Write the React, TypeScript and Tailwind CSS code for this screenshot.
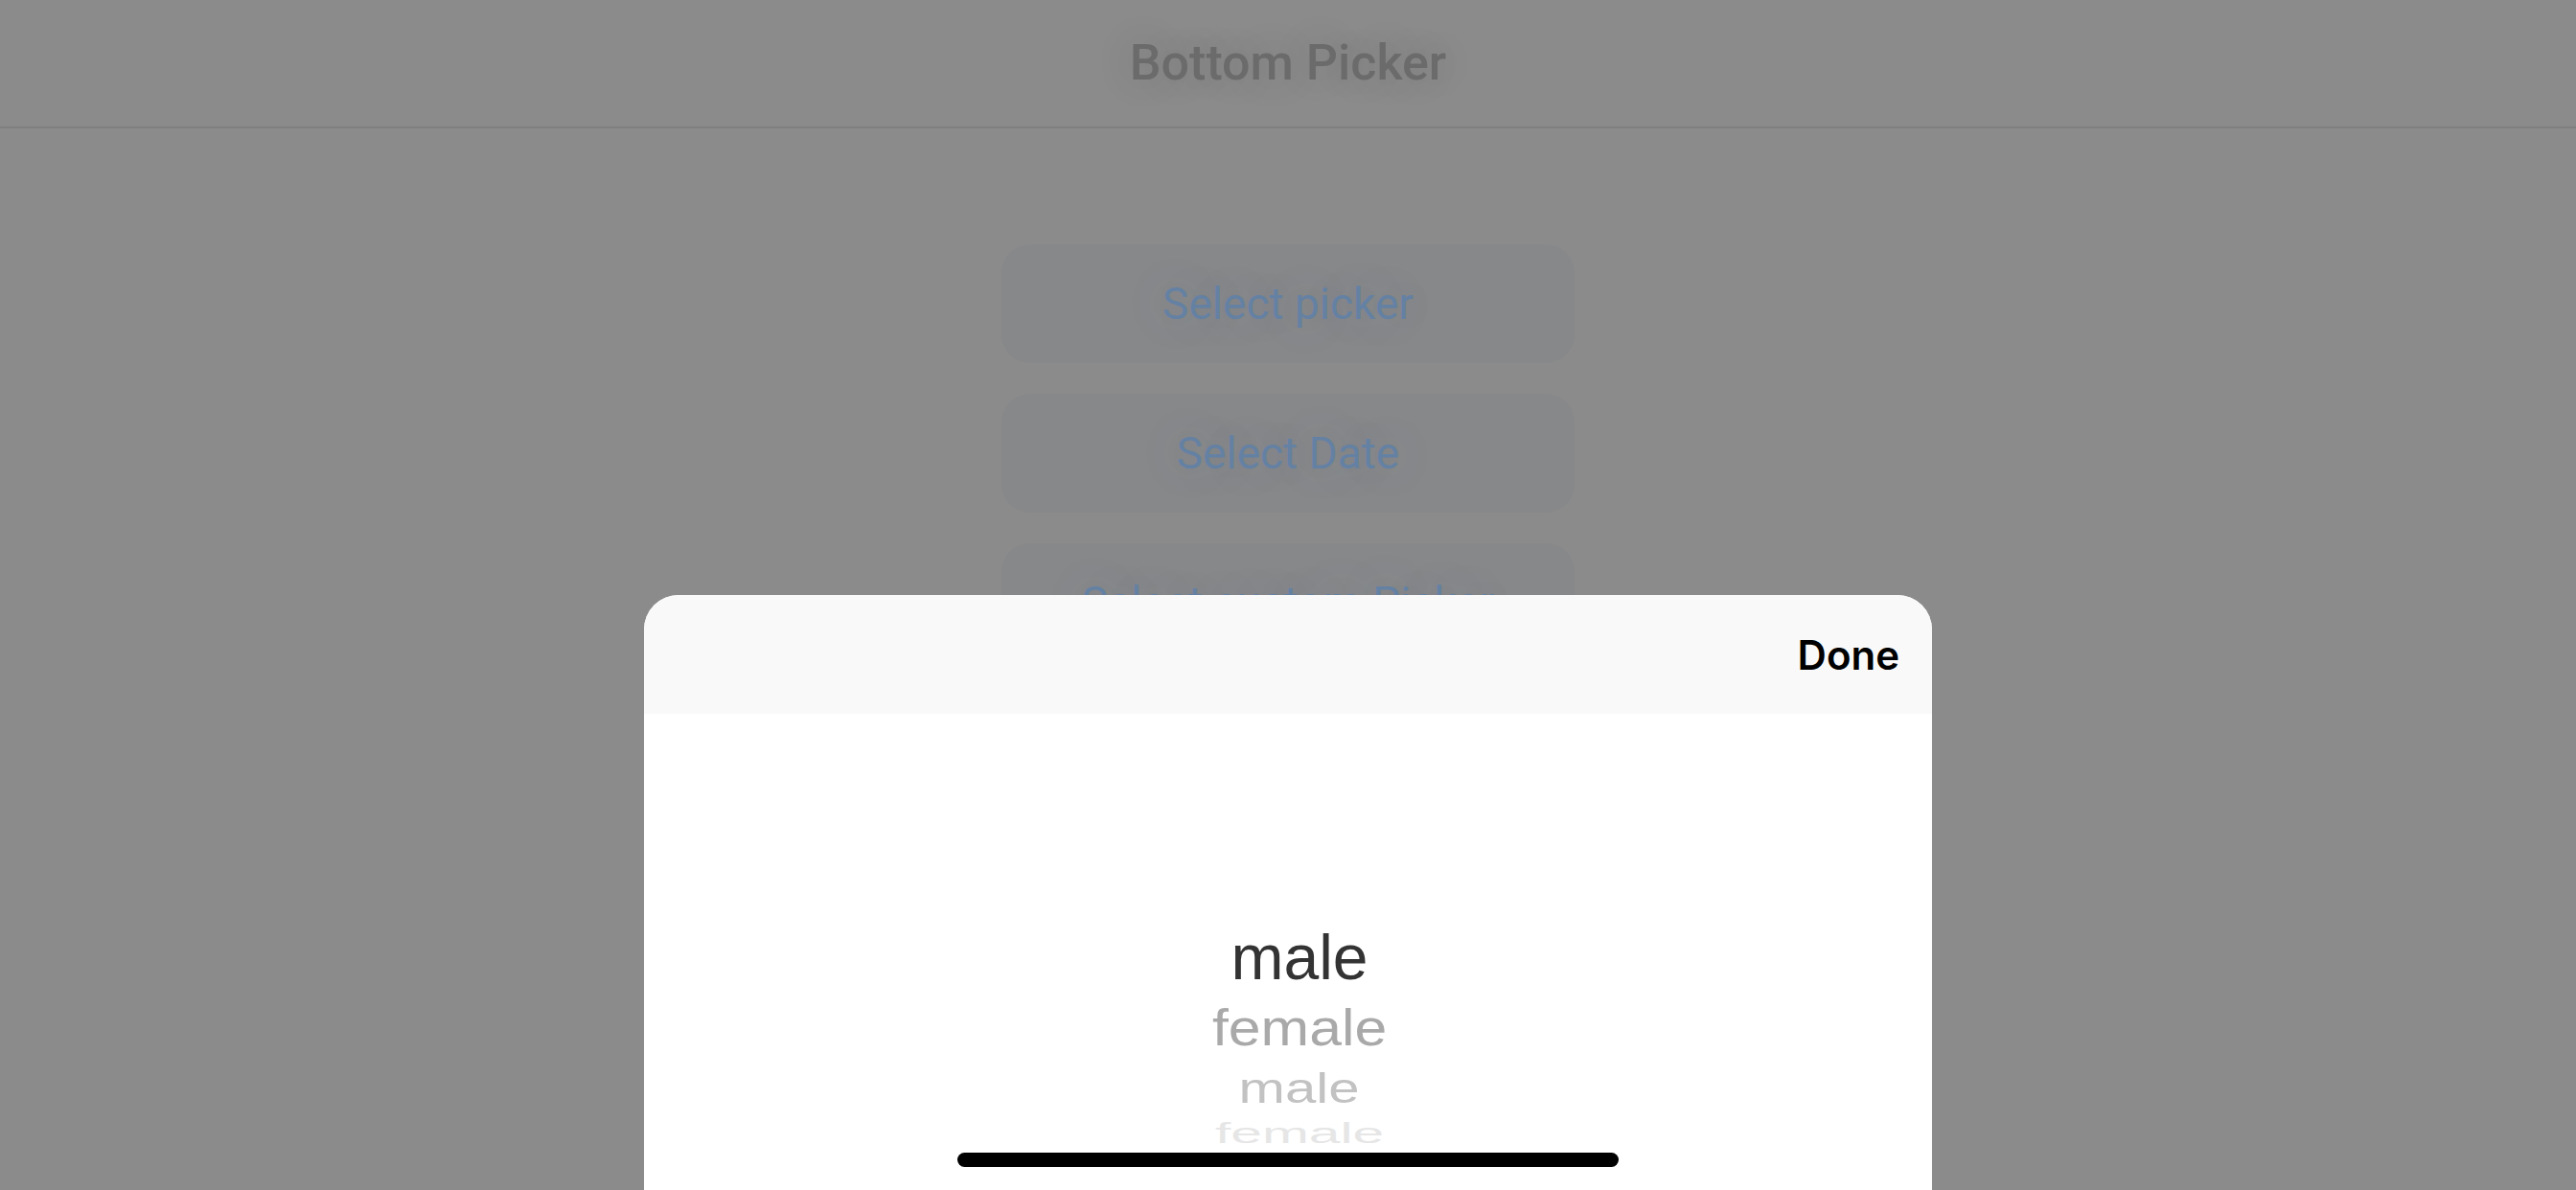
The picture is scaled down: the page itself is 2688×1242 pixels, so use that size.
import React from "react";

const actions = ["Select picker", "Select Date", "Select custom Picker"];

const wheel = [
  { label: "male", color: "text-[#333333]", cls: "", scale: "scale-100" },
  { label: "female", color: "text-[#a9a9a9]", cls: "mt-[7px]", scale: "scale-x-[0.92] scale-y-[0.82]" },
  { label: "male", color: "text-[#c2c2c2]", cls: "-mt-[2px]", scale: "scale-x-[0.88] scale-y-[0.66]" },
  { label: "female", color: "text-[#e6e6e6]", cls: "-mt-[19px]", scale: "scale-x-[0.89] scale-y-[0.44]" },
];

export default function App() {
  return (
    <div className="relative w-[2688px] h-[1242px] overflow-hidden bg-[#8b8b8b] font-['Roboto',sans-serif]">
      {/* page behind the sheet (dimmed) */}
      <header className="h-[134px] border-b-2 border-[#7f7f7f] flex items-center justify-center">
        <h1 className="text-[52px] font-medium text-[#6b6b6b] leading-none [text-shadow:0_0_40px_rgba(0,0,0,0.16)]">
          Bottom Picker
        </h1>
      </header>

      <div className="mx-auto mt-[121px] w-[598px] flex flex-col gap-[32px]">
        {actions.map((a) => (
          <button
            key={a}
            className="h-[124px] rounded-[30px] bg-[#87888a] flex items-center justify-center text-[46px] text-[#6481a3] leading-none [text-shadow:0_0_60px_rgba(110,140,180,0.18)]"
          >
            {a}
          </button>
        ))}
      </div>

      {/* bottom sheet */}
      <div className="absolute left-[672px] top-[621px] bottom-0 w-[1344px] rounded-t-[36px] overflow-hidden bg-white flex flex-col">
        <div className="h-[124px] bg-[#f9f9f9] flex items-center justify-end pr-[34px]">
          <span className="font-['Inter',sans-serif] text-[42px] font-semibold text-black">Done</span>
        </div>
        <div className="flex-1 flex flex-col items-center pt-[221px] pl-[24px] font-['Liberation_Sans',Arial,sans-serif]">
          {wheel.map((w, i) => (
            <div
              key={i}
              className={`h-[66px] leading-[66px] text-[66px] ${w.color} ${w.cls} ${w.scale} origin-center`}
            >
              {w.label}
            </div>
          ))}
        </div>
        <div className="absolute bottom-[24px] left-1/2 -translate-x-1/2 w-[690px] h-[15px] rounded-full bg-black" />
      </div>
    </div>
  );
}
